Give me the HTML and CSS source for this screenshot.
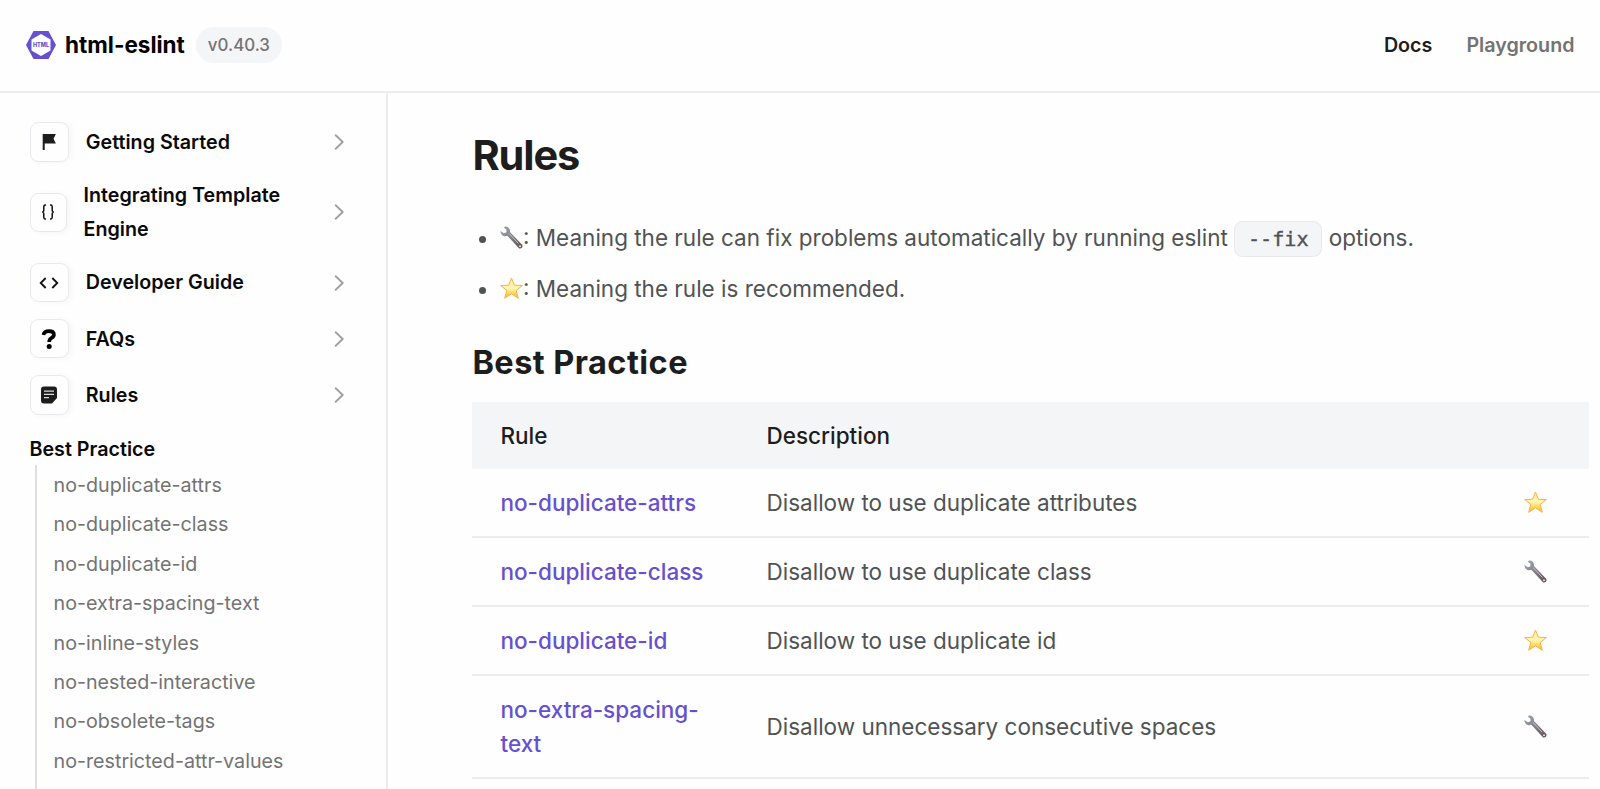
FILE: index.html
```
<!DOCTYPE html>
<html lang="en">
<head>
  <meta charset="UTF-8" />
  <meta name="viewport" content="width=device-width, initial-scale=1.0" />
  <title>Rules - html-eslint</title>
  <link rel="stylesheet" href="styles.css">
</head>
<body>
  <!-- shared icons -->
  <svg class="defs" width="0" height="0">
    <defs>
      <linearGradient id="starFill" x1="0" y1="0" x2="0" y2="1">
        <stop offset="0" stop-color="#ffeca0" />
        <stop offset="0.5" stop-color="#fff5ae" />
        <stop offset="1" stop-color="#fbb80f" />
      </linearGradient>
      <linearGradient id="wrenchFill" x1="0" y1="0" x2="1" y2="1">
        <stop offset="0" stop-color="#9aa7b5" />
        <stop offset="0.5" stop-color="#857f88" />
        <stop offset="1" stop-color="#5c494c" />
      </linearGradient>
      <symbol id="star" viewBox="0 0 24 24">
        <path d="M12 1.200l3.100 7.400 8.200.4-6.400 5 2.200 8.200-7.100-4.600-7.100 4.600 2.200-8.200-6.400-5 8.200-.4z" fill="url(#starFill)" stroke="#efb14b" stroke-width="1" stroke-linejoin="round" />
      </symbol>
      <symbol id="wrench" viewBox="0 0 24 24">
        <path d="M5.200.6c3-.3 5.600 2.200 5.200 5.700l12.700 13.300c1.300 1.800-.9 4.700-3.300 3.500L7.600 10.200C4 11.700.4 8.900.5 5.200l3.600 2.300 2.700-1-.2-2.900L4 1.800z" fill="url(#wrenchFill)" />
        <path d="M9.500 7.800l9.700 10.400" stroke="#c3c6ce" stroke-width="1" fill="none" />
        <circle cx="20.900" cy="21.200" r="1" fill="#eee" />
      </symbol>
      <symbol id="chevron" viewBox="0 0 10 16">
        <path d="M1.700 1.200L8.700 8l-7 6.800" fill="none" stroke="#a0a0a4" stroke-width="1.900" stroke-linecap="round" stroke-linejoin="round" />
      </symbol>
    </defs>
  </svg>

  <header class="header">
    <a class="brand">
      <svg class="logo" viewBox="0 0 30 28">
        <path d="M7.500 0h15L30 14l-7.500 14h-15L0 14z" fill="#6750d0" />
        <path d="M15 3l9.500 5.500v11L15 25l-9.500-5.500v-11z" fill="#fff" />
        <text x="15" y="16" text-anchor="middle" class="logo-text">HTML</text>
      </svg>
      <span class="brand-name">html-eslint</span>
      <span class="version">v0.40.3</span>
    </a>
    <nav class="nav">
      <a class="active">Docs</a>
      <a>Playground</a>
    </nav>
  </header>

  <div class="layout">
    <aside class="sidebar">
      <div class="menu-item">
        <span class="icon-box"><svg width="16" height="18" viewBox="0 0 16 18"><path d="M1.700 1h13.200l-2.400 4.700 2.400 4.800H3.700V17h-2z" fill="#1d1d1d" /></svg></span>
        <span class="label">Getting Started</span>
        <svg class="chevron"><use href="#chevron" /></svg>
      </div>
      <div class="menu-item wide">
        <span class="icon-box"><svg width="14" height="16" viewBox="0 0 14 16"><path d="M5 1H4.300Q2.800 1 2.800 2.700v3Q2.800 8 1.200 8q1.600 0 1.600 2.300v3Q2.800 15 4.300 15H5M9 1h.7q1.500 0 1.500 1.700v3Q11.200 8 12.800 8q-1.600 0-1.600 2.300v3Q11.200 15 9.700 15H9" fill="none" stroke="#111" stroke-width="1.500" /></svg></span>
        <span class="label">Integrating Template Engine</span>
        <svg class="chevron"><use href="#chevron" /></svg>
      </div>
      <div class="menu-item">
        <span class="icon-box"><svg width="20" height="12" viewBox="0 0 20 12"><path d="M6.700 1L1.700 6l5 5M13.300 1l5 5-5 5" fill="none" stroke="#111" stroke-width="1.800" /></svg></span>
        <span class="label">Developer Guide</span>
        <svg class="chevron"><use href="#chevron" /></svg>
      </div>
      <div class="menu-item">
        <span class="icon-box"><svg width="16" height="20" viewBox="0 0 16 20"><path d="M2.500 6Q3.200 2.200 8 2.200q4.900 0 4.900 3.600 0 2-2.500 3.200Q8.200 10.200 8.200 13" fill="none" stroke="#000" stroke-width="3.700" /><circle cx="8.200" cy="17.400" r="2.500" /></svg></span>
        <span class="label">FAQs</span>
        <svg class="chevron"><use href="#chevron" /></svg>
      </div>
      <div class="menu-item">
        <span class="icon-box"><svg width="16" height="18" viewBox="0 0 16 18"><path d="M3 .5h10q3 0 3 3v8.500l-5 5.500H3q-3 0-3-3v-11q0-3 3-3z" fill="#1d1d1d" /><path d="M3 5.200h10M3 8.400h10M3 11.600h5" stroke="#ddd" stroke-width="1.300" /></svg></span>
        <span class="label">Rules</span>
        <svg class="chevron"><use href="#chevron" /></svg>
      </div>

      <div class="group-title">Best Practice</div>
      <ul class="group">
        <li>no-duplicate-attrs</li>
        <li>no-duplicate-class</li>
        <li>no-duplicate-id</li>
        <li>no-extra-spacing-text</li>
        <li>no-inline-styles</li>
        <li>no-nested-interactive</li>
        <li>no-obsolete-tags</li>
        <li>no-restricted-attr-values</li>
      </ul>
    </aside>

    <main class="content">
      <h1>Rules</h1>
      <ul class="legend">
        <li><svg class="emoji"><use href="#wrench" /></svg>: Meaning the rule can fix problems automatically by running eslint <code>--fix</code> options.</li>
        <li><svg class="emoji"><use href="#star" /></svg>: Meaning the rule is recommended.</li>
      </ul>
      <h2>Best Practice</h2>
      <div class="table">
        <div class="row head"><span>Rule</span><span>Description</span><span></span></div>
        <div class="row"><a>no-duplicate-attrs</a><span>Disallow to use duplicate attributes</span><svg class="emoji"><use href="#star" /></svg></div>
        <div class="row"><a>no-duplicate-class</a><span>Disallow to use duplicate class</span><svg class="emoji"><use href="#wrench" /></svg></div>
        <div class="row"><a>no-duplicate-id</a><span>Disallow to use duplicate id</span><svg class="emoji"><use href="#star" /></svg></div>
        <div class="row"><a>no-extra-spacing-text</a><span>Disallow unnecessary consecutive spaces</span><svg class="emoji"><use href="#wrench" /></svg></div>
      </div>
    </main>
  </div>
</body>
</html>
```
FILE: styles.css
```
* {
  box-sizing: border-box;
}

body {
  margin: 0;
  height: 789px;
  overflow: hidden;
  display: flex;
  flex-direction: column;
  font-family: Inter, "Liberation Sans", sans-serif;
  font-size: 22.5px;
  line-height: 33.75px;
  color: #505354;
  background-color: #fefefe;
}

.defs {
  position: absolute;
}

.header {
  flex: none;
  height: 93px;
  padding: 0 25.5px 1px 25.5px;
  display: flex;
  align-items: center;
  justify-content: space-between;
  border-bottom: 2px solid #ececee;
}

.brand {
  display: flex;
  align-items: center;
}

.logo {
  width: 30px;
  height: 28px;
  margin-right: 9.5px;
}

.logo-text {
  font-size: 5.5px;
  font-weight: 800;
  fill: #6750d0;
}

.brand-name {
  font-weight: 700;
  color: #000;
}

.version {
  margin-left: 11px;
  padding: 0 12px;
  height: 36px;
  line-height: 36px;
  border-radius: 18px;
  background-color: #f4f5f7;
  font-size: 16.9px;
  font-weight: 500;
  color: #737373;
}

.nav {
  display: flex;
  gap: 34px;
  padding-top: 1px;
  font-size: 19.7px;
  font-weight: 600;
  color: #737373;
}

.nav .active {
  color: #1d1d1d;
}

.layout {
  flex: 1;
  min-height: 0;
  display: flex;
}

.sidebar {
  flex: none;
  width: 388px;
  padding: 21px 42px 0 29.5px;
  border-right: 2px solid #ececf0;
  font-size: 19.7px;
  overflow: hidden;
}

.menu-item {
  display: flex;
  align-items: center;
  padding: 8.4px 0;
  font-weight: 600;
  color: #0a0a0a;
}

.icon-box {
  flex: none;
  width: 39.4px;
  height: 39.4px;
  display: flex;
  align-items: center;
  justify-content: center;
  border: 1.4px solid #e8e8ed;
  border-radius: 8.4px;
  box-shadow: 3px 1px 6px rgba(0, 0, 0, 0.035);
}

.wide .icon-box {
  width: 37.2px;
}

.label {
  flex: 1;
  padding: 0.7px 40px 0 16.9px;
  margin-bottom: -0.7px;
}

.chevron {
  flex: none;
  width: 10px;
  height: 16px;
}

.group-title {
  padding-top: 10px;
  line-height: 33px;
  font-weight: 600;
  color: #0a0a0a;
}

.group {
  list-style: none;
  margin: -1px 0 0 5.5px;
  padding: 1px 0 20px 16.5px;
  border-left: 2px solid #dcdee8;
  color: #737373;
}

.group li {
  height: 39.4px;
  line-height: 39.4px;
}

.content {
  flex: 1;
  padding: 41px 11px 0 84.4px;
}

h1,
h2 {
  margin: 0;
  color: #1d1d1d;
}

h1 {
  font-size: 41.5px;
  line-height: 42px;
  font-weight: 700;
  letter-spacing: -1.1px;
}

h2 {
  margin-top: 20px;
  font-size: 32.5px;
  line-height: 40px;
  font-weight: 700;
  letter-spacing: 0.45px;
}

.legend {
  margin: 45px 0 0;
  padding-left: 27.6px;
}

.legend li {
  height: 51.2px;
  line-height: 33.75px;
}

.legend .emoji {
  vertical-align: -3px;
}

.emoji {
  width: 23px;
  height: 23px;
}

code {
  display: inline-block;
  height: 36px;
  margin-top: -3px;
  padding: 0 12.7px;
  line-height: 34px;
  border: 1.4px solid #e9e9ec;
  border-radius: 8.4px;
  background-color: #f4f5f7;
  font-family: "DejaVu Sans Mono", monospace;
  font-size: 20.2px;
  -webkit-text-stroke: 0.4px #505354;
}

.table {
  margin-top: 18.3px;
}

.row {
  display: grid;
  grid-template-columns: 266px 1fr 65px;
  align-items: center;
  padding: 16.9px 0 16.3px 28.1px;
  border-bottom: 2px solid #ececef;
}

.row.head {
  padding-bottom: 16.8px;
  border-bottom: none;
  background-color: #f4f5f7;
  font-weight: 500;
  color: #1d1d1d;
}

.row a {
  width: 210px;
  font-weight: 500;
  color: #6750d0;
}
```
